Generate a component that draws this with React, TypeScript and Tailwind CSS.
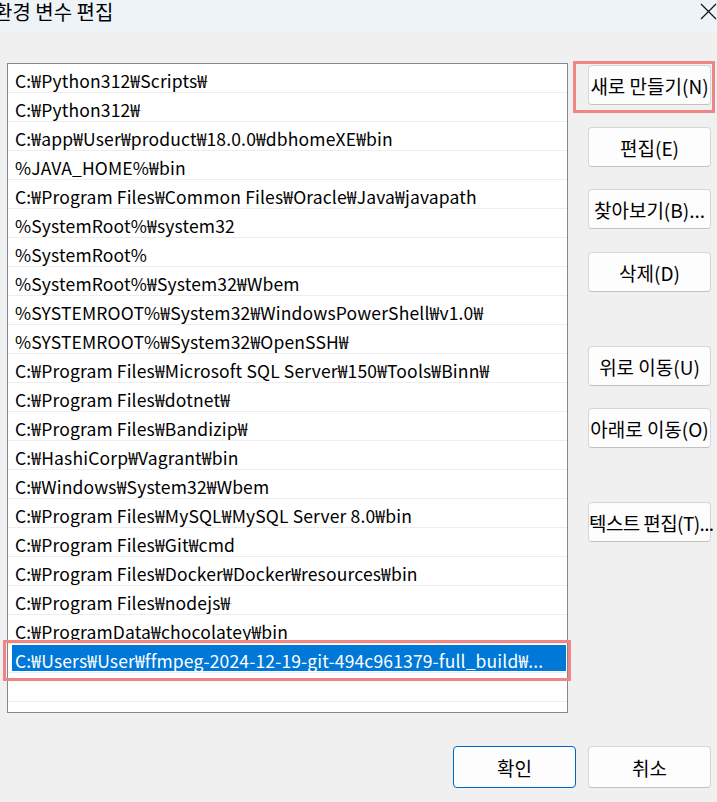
const paths = [
  'C:₩Python312₩Scripts₩',
  'C:₩Python312₩',
  'C:₩app₩User₩product₩18.0.0₩dbhomeXE₩bin',
  '%JAVA_HOME%₩bin',
  'C:₩Program Files₩Common Files₩Oracle₩Java₩javapath',
  '%SystemRoot%₩system32',
  '%SystemRoot%',
  '%SystemRoot%₩System32₩Wbem',
  '%SYSTEMROOT%₩System32₩WindowsPowerShell₩v1.0₩',
  '%SYSTEMROOT%₩System32₩OpenSSH₩',
  'C:₩Program Files₩Microsoft SQL Server₩150₩Tools₩Binn₩',
  'C:₩Program Files₩dotnet₩',
  'C:₩Program Files₩Bandizip₩',
  'C:₩HashiCorp₩Vagrant₩bin',
  'C:₩Windows₩System32₩Wbem',
  'C:₩Program Files₩MySQL₩MySQL Server 8.0₩bin',
  'C:₩Program Files₩Git₩cmd',
  'C:₩Program Files₩Docker₩Docker₩resources₩bin',
  'C:₩Program Files₩nodejs₩',
  'C:₩ProgramData₩chocolatey₩bin',
];

const selected = 'C:₩Users₩User₩ffmpeg-2024-12-19-git-494c961379-full_build₩...';

function SideButton({ label, className = '' }: { label: string; className?: string }) {
  return (
    <button
      className={`h-[40px] w-[123px] rounded-[4px] border border-[#d6d6d6] border-b-[#c2c2c2] bg-[#fdfdfd] text-[19px] leading-none text-black whitespace-nowrap ${className}`}
    >
      {label}
    </button>
  );
}

export default function App() {
  return (
    <div className="relative w-[717px] h-[802px] overflow-hidden bg-[#f0f0f0] [font-family:'Noto_Sans_CJK_KR',sans-serif] text-black">
      {/* 제목 표시줄 */}
      <div className="h-[32px] bg-[#eef3f8] flex items-center justify-between">
        <span className="ml-[-6px] mt-[-8px] text-[20px] leading-none">환경 변수 편집</span>
        <svg width="17" height="17" viewBox="0 0 17 17" className="mt-[-10px]">
          <path d="M1 1 L16 16 M16 1 L1 16" stroke="#111" strokeWidth="1.2" />
        </svg>
      </div>

      <div className="flex pt-[31px] pl-[7px]">
        {/* 목록 */}
        <div className="w-[561px] h-[650px] border border-[#84878e] bg-white">
          {paths.map((p) => (
            <div
              key={p}
              className="h-[29px] border-b border-[#ededed] pl-[7px] pt-[7px] flex items-center text-[17.5px] tracking-[0.15px] whitespace-nowrap overflow-hidden"
            >
              {p}
            </div>
          ))}
          <div className="h-[29px] border-b border-[#ededed] pl-[4px] pr-[1px] py-[1px]">
            <div className="h-full bg-[#0078d7] text-white pl-[3px] pt-[6px] flex items-center text-[17.5px] tracking-[0.15px] whitespace-nowrap overflow-hidden">
              {selected}
            </div>
          </div>
          <div className="h-[29px] border-b border-[#ededed]" />
        </div>

        {/* 버튼 */}
        <div className="ml-[20px] flex flex-col">
          <SideButton label="새로 만들기(N)" className="mt-[2px]" />
          <SideButton label="편집(E)" className="mt-[22px]" />
          <SideButton label="찾아보기(B)..." className="mt-[22px]" />
          <SideButton label="삭제(D)" className="mt-[23px]" />
          <SideButton label="위로 이동(U)" className="mt-[54px]" />
          <SideButton label="아래로 이동(O)" className="mt-[22px]" />
          <SideButton label="텍스트 편집(T)..." className="mt-[54px] tracking-[-0.6px]" />
        </div>
      </div>

      {/* 하단 버튼 */}
      <div className="mt-[33px] flex justify-end gap-[12px] pr-[6px]">
        <button className="h-[42px] w-[123px] rounded-[4px] border border-[#0067c0] bg-[#fdfdfd] text-[19px] leading-none">
          확인
        </button>
        <button className="h-[42px] w-[123px] rounded-[4px] border border-[#d6d6d6] border-b-[#c2c2c2] bg-[#fdfdfd] text-[19px] leading-none">
          취소
        </button>
      </div>

      {/* 강조 표시 */}
      <div className="absolute left-[573px] top-[61px] w-[142px] h-[52px] border-[3px] border-[#ee8686] pointer-events-none" />
      <div className="absolute left-[3px] top-[640px] w-[568px] h-[41px] border-[3px] border-[#ee8686] pointer-events-none" />
    </div>
  );
}
